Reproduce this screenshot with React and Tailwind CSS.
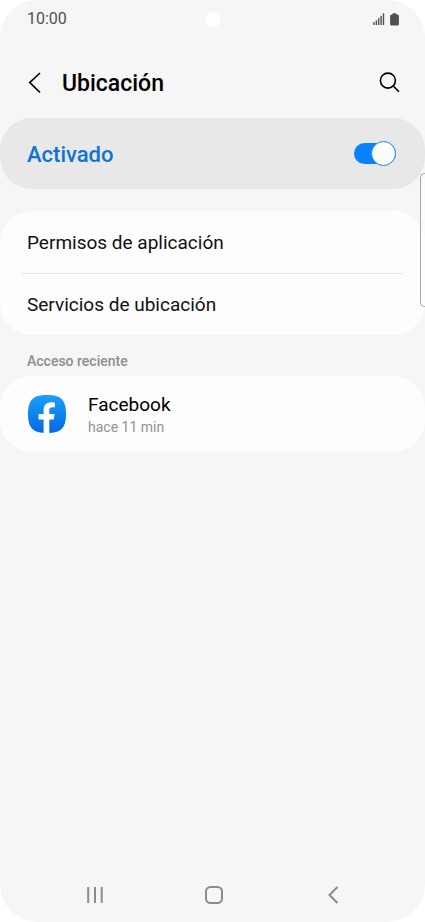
import { useState } from 'react';

function StatusBar() {
    return (
        <div className="relative flex h-[38px] items-center justify-between pr-[26px] pl-[27px] text-[#505050]">
            <span className="text-[16px] leading-5">10:00</span>
            <span className="absolute top-3 left-1/2 size-[15px] -translate-x-1/2 rounded-full bg-white" />
            <div className="flex items-center gap-[5px]">
                <svg width="12" height="12" viewBox="0 0 12 12" aria-label="Cobertura" role="img">
                    <g fill="currentColor">
                        <rect x="0.3" y="9" width="1.4" height="3" />
                        <rect x="2.7" y="7.4" width="1.4" height="4.6" />
                        <rect x="5" y="5.2" width="1.4" height="6.8" />
                        <rect x="7.4" y="2.8" width="1.4" height="9.2" />
                        <rect x="9.8" y="0.3" width="1.4" height="11.7" />
                    </g>
                </svg>
                <svg width="9" height="13" viewBox="0 0 9 13" aria-label="Batería" role="img">
                    <path d="M2.4 1.6V1.2Q2.4 0.3 3.3 0.3H5.7Q6.6 0.3 6.6 1.2V1.6H7.4Q8.9 1.6 8.9 3.1V11Q8.9 12.5 7.4 12.5H1.6Q0.1 12.5 0.1 11V3.1Q0.1 1.6 1.6 1.6Z" fill="currentColor" />
                </svg>
            </div>
        </div>
    );
}

function FacebookIcon() {
    return (
        <svg width="38" height="38" viewBox="0 0 38 38" className="shrink-0" aria-hidden="true">
            <defs>
                <linearGradient id="fb" x1="0" y1="0" x2="0" y2="1">
                    <stop offset="0" stopColor="#18a0f8" />
                    <stop offset="1" stopColor="#0668e6" />
                </linearGradient>
            </defs>
            <path d="M19 0C33 0 38 5 38 19S33 38 19 38 0 33 0 19 5 0 19 0Z" fill="url(#fb)" />
            <path d="M15.6 37.9V24.6H10.6V19.1H15.6V15.3C15.6 10 18.6 7.2 23.2 7.2C25 7.2 26.9 7.5 26.9 7.5V12.3H24.4C22 12.3 21.3 13.7 21.3 15.3V19.1H26.6L25.7 24.6H21.3V37.9Q18.4 38.1 15.6 37.9Z" fill="#fff" />
        </svg>
    );
}

export default function App() {
    const [enabled, setEnabled] = useState(true);

    return (
        <div className="min-h-screen bg-white font-[Roboto,sans-serif]">
            <div className="relative flex min-h-screen flex-col overflow-hidden rounded-[38px] bg-[#f6f6f6] text-black">
                <StatusBar />

                <header className="mt-[18px] mb-2 flex h-[54px] items-center">
                    <button type="button" aria-label="Atrás" className="ml-6 flex size-6 items-center justify-center">
                        <svg width="24" height="24" viewBox="0 0 24 24" fill="none" stroke="currentColor" strokeWidth="1.7">
                            <path d="M16 2L5.8 11.5L16 21.5" />
                        </svg>
                    </button>
                    <h1 className="ml-3.5 pt-0.5 text-[23px] leading-7 font-medium">Ubicación</h1>
                    <button type="button" aria-label="Buscar" className="mr-6 ml-auto flex size-6 items-center justify-center">
                        <svg width="24" height="24" viewBox="0 0 24 24" fill="none" stroke="currentColor" strokeWidth="1.6">
                            <circle cx="10.9" cy="9.6" r="7.5" />
                            <path d="M16.3 15L22 20.8" />
                        </svg>
                    </button>
                </header>

                <main>
                    <label className="flex h-[71px] items-center justify-between rounded-[32px] bg-[#e8e8e8] pr-[29px] pl-[27px]">
                        <span className="pt-0.5 text-[22px] leading-7 font-medium text-[#0f73d6]">Activado</span>
                        <input
                            type="checkbox"
                            role="switch"
                            checked={enabled}
                            onChange={(e) => setEnabled(e.target.checked)}
                            className="relative h-[21px] w-[42px] appearance-none rounded-full bg-[#9a9a9a] before:absolute before:-top-0.5 before:left-0 before:size-[25px] before:rounded-full before:border before:border-[#9a9a9a] before:bg-[#fcfcfc] checked:bg-[#0a82ff] checked:before:right-0 checked:before:left-auto checked:before:border-[#2a84e4]"
                        />
                    </label>

                    <div className="mt-[22px] rounded-[32px] bg-[#fdfdfd] px-[22px]">
                        <a href="#permisos" className="flex h-[62px] items-center px-[5px] pt-0.5 text-[19px] leading-6 text-[#111]">
                            Permisos de aplicación
                        </a>
                        <a href="#servicios" className="flex h-[62px] items-center border-t border-[#e4e4e4] px-[5px] text-[19px] leading-6 text-[#111]">
                            Servicios de ubicación
                        </a>
                    </div>

                    <h2 className="mt-4 mb-[5px] px-[27px] text-[14px] leading-5 font-medium text-[#8e8e8e]">Acceso reciente</h2>
                    <a href="#facebook" className="flex h-[76px] items-center gap-[22px] rounded-[32px] bg-[#fdfdfd] px-7">
                        <FacebookIcon />
                        <span className="flex flex-col pt-0.5">
                            <span className="text-[19px] leading-6">Facebook</span>
                            <span className="text-[14px] leading-5 text-[#929292]">hace 11 min</span>
                        </span>
                    </a>
                </main>

                <nav className="mt-auto flex h-[54px] items-center justify-center gap-[95px] pl-0.5 text-[#8c8c8c]">
                    <button type="button" aria-label="Recientes" className="size-6">
                        <svg width="24" height="24" viewBox="0 0 24 24" fill="none" stroke="currentColor" strokeWidth="2">
                            <path d="M5.2 4V20M12 4V20M18.7 4V20" />
                        </svg>
                    </button>
                    <button type="button" aria-label="Inicio" className="size-6">
                        <svg width="24" height="24" viewBox="0 0 24 24" fill="none" stroke="currentColor" strokeWidth="2">
                            <rect x="4" y="4" width="16" height="16" rx="4.5" />
                        </svg>
                    </button>
                    <button type="button" aria-label="Volver" className="size-6">
                        <svg width="24" height="24" viewBox="0 0 24 24" fill="none" stroke="currentColor" strokeWidth="2">
                            <path d="M16.5 4L8.5 12L16.5 20" />
                        </svg>
                    </button>
                </nav>

                {/* edge panel handle */}
                <span className="absolute top-[173px] right-0 h-[134px] w-[5px] rounded-l-[5px] border border-r-0 border-[#a8a8a8] bg-white/60" />
            </div>
        </div>
    );
}
